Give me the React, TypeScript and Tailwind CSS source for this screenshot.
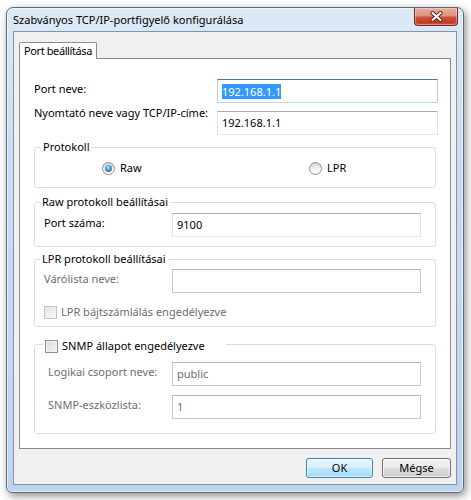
import React from "react";

const inputBase =
  "flex items-center h-[24px] pl-[4px] bg-white border border-t-[#abadb3] border-l-[#e2e3ea] border-r-[#e2e3ea] border-b-[#e3e9ef]";

function Radio({ checked }: { checked?: boolean }) {
  return (
    <span className="flex items-center justify-center w-[13px] h-[13px] rounded-full border border-[#8e8f8f] bg-[linear-gradient(180deg,#d4d4d4_0%,#f4f4f4_60%,#ffffff_100%)] shrink-0">
      {checked && (
        <span className="w-[7px] h-[7px] rounded-full bg-[radial-gradient(circle_at_45%_35%,#c4e6f8_0%,#4a98cc_45%,#1a5a8a_100%)]" />
      )}
    </span>
  );
}

function Checkbox({ disabled }: { disabled?: boolean }) {
  return (
    <span
      className={
        disabled
          ? "w-[13px] h-[13px] border border-[#c4c4c4] bg-[linear-gradient(135deg,#e6e6e6_0%,#f7f7f7_100%)] shrink-0"
          : "w-[13px] h-[13px] border border-[#8e8f8f] bg-[linear-gradient(135deg,#d8d8d8_0%,#f6f6f6_100%)] shadow-[inset_0_0_0_1px_#f4f4f4] shrink-0"
      }
    />
  );
}

export default function App() {
  return (
    <div className="w-[471px] h-[500px] bg-white pt-[7px] pl-[6px] font-['Noto_Sans',sans-serif] text-[11px] leading-[16px] text-black">
      <div className="w-[458px] h-[486px] rounded-t-[7px] rounded-b-[6px] border border-[#5a6878] bg-[linear-gradient(180deg,#dde9f5_0%,#cadcf0_30%,#bed4ed_100%)] shadow-[inset_0_0_0_1px_rgba(255,255,255,0.65),2px_3px_8px_rgba(0,0,0,0.45)] flex flex-col">
        {/* title bar */}
        <div className="h-[23px] flex items-start justify-between">
          <span className="pl-[6px] pt-[4px] text-[11px] leading-[16px] text-black">
            Szabványos TCP/IP-portfigyelő konfigurálása
          </span>
          <div className="mr-[5px] w-[44px] h-[18px] rounded-b-[4px] border border-t-0 border-[#6e2d24] bg-[linear-gradient(180deg,#e6ad9e_0%,#dc9280_45%,#c9533e_55%,#c43a26_85%,#d0563f_100%)] shadow-[inset_0_0_0_1px_rgba(255,255,255,0.35)] flex items-center justify-center">
            <svg width="13" height="11" viewBox="0 0 13 11">
              <path d="M2.5 2 L10.5 9 M10.5 2 L2.5 9" stroke="#5a1d16" strokeWidth="4" strokeLinecap="round" />
              <path d="M2.5 2 L10.5 9 M10.5 2 L2.5 9" stroke="#ffffff" strokeWidth="2.2" strokeLinecap="round" />
            </svg>
          </div>
        </div>
        {/* client area */}
        <div className="mx-[6px] h-[454px] border border-[#7f94ad] bg-[#f0f0f0] flex flex-col pt-[10px] pl-[5px] pr-[5px]">
          {/* tabs */}
          <div className="flex">
            <div className="relative z-10 -mb-px w-[78px] h-[17px] border border-b-0 border-[#898c95] rounded-t-[2px] bg-white flex items-center justify-center whitespace-nowrap tracking-[-0.4px]">
              Port beállítása
            </div>
          </div>
          {/* panel */}
          <div className="h-[391px] border border-[#898c95] bg-white flex flex-col pl-[14px] pr-[12px] pt-[20px]">
            {/* row 1 */}
            <div className="flex justify-between items-start">
              <span className="mt-[2px]">Port neve:</span>
              <div className="w-[221px] h-[24px] flex items-center pl-[4px] bg-white border border-t-[#3d7bad] border-l-[#b5cfe7] border-r-[#b5cfe7] border-b-[#b7d9ed]">
                <span className="bg-[#3399ff] text-white leading-[15px]">192.168.1.1</span>
              </div>
            </div>
            {/* row 2 */}
            <div className="flex justify-between items-start mt-[2px]">
              <span>Nyomtató neve vagy TCP/IP-címe:</span>
              <div className={"w-[221px] mt-[6px] " + inputBase}>192.168.1.1</div>
            </div>
            {/* Protokoll */}
            <fieldset className="mt-[4px] w-[402px] border border-[#d5dfe5] rounded-[3px] pb-[11px]">
              <legend className="ml-[6px] px-[2px]">Protokoll</legend>
              <div className="flex items-center mt-[5px] pl-[67px]">
                <div className="w-[207px] flex items-center gap-[5px]">
                  <Radio checked />
                  <span>Raw</span>
                </div>
                <div className="flex items-center gap-[5px]">
                  <Radio />
                  <span>LPR</span>
                </div>
              </div>
            </fieldset>
            {/* Raw */}
            <fieldset className="mt-[6px] w-[402px] border border-[#d5dfe5] rounded-[3px] pb-[9px] pl-[9px] pr-[14px]">
              <legend className="-ml-[4px] px-[2px]">Raw protokoll beállításai</legend>
              <div className="flex justify-between items-start mt-[3px]">
                <span className="mt-[2px]">Port száma:</span>
                <div className={"w-[249px] " + inputBase}>9100</div>
              </div>
            </fieldset>
            {/* LPR */}
            <fieldset className="mt-[4px] w-[402px] border border-[#d5dfe5] rounded-[3px] pb-[6px] pl-[9px] pr-[14px]">
              <legend className="-ml-[4px] px-[2px]">LPR protokoll beállításai</legend>
              <div className="flex justify-between items-start mt-[2px]">
                <span className="mt-[2px] text-[#6d6d6d]">Várólista neve:</span>
                <div className="w-[249px] h-[24px] bg-white border border-[#c9c9c9] border-t-[#b4b4b4]" />
              </div>
              <div className="flex items-center gap-[4px] mt-[11px] h-[16px]">
                <Checkbox disabled />
                <span className="text-[#6d6d6d]">LPR bájtszámlálás engedélyezve</span>
              </div>
            </fieldset>
            {/* SNMP */}
            <fieldset className="mt-[7px] w-[402px] border border-[#d5dfe5] rounded-[3px] pb-[14px] pl-[13px] pr-[14px]">
              <legend className="-ml-[5px] pl-[2px] pr-[21px] pt-[4px] flex items-center gap-[4px]">
                <Checkbox />
                <span>SNMP állapot engedélyezve</span>
              </legend>
              <div className="flex justify-between items-start mt-[8px]">
                <span className="mt-[2px] text-[#6d6d6d]">Logikai csoport neve:</span>
                <div className="w-[249px] h-[24px] flex items-center pl-[4px] bg-white border border-[#c9c9c9] border-t-[#b4b4b4] text-[#6d6d6d]">
                  public
                </div>
              </div>
              <div className="flex justify-between items-start mt-[9px]">
                <span className="mt-[2px] text-[#6d6d6d]">SNMP-eszközlista:</span>
                <div className="w-[249px] h-[24px] flex items-center pl-[4px] bg-white border border-[#c9c9c9] border-t-[#b4b4b4] text-[#6d6d6d]">
                  1
                </div>
              </div>
            </fieldset>
          </div>
          {/* buttons */}
          <div className="flex justify-end gap-[9px] mt-[9px] pr-[0px]">
            <button className="w-[67px] h-[20px] rounded-[3px] border border-[#3c7fb1] bg-[linear-gradient(180deg,#eaf6fd_0%,#d9f0fc_50%,#bee6fd_51%,#a7d9f5_100%)] shadow-[inset_0_0_0_1px_rgba(255,255,255,0.6)] text-[11px] leading-[16px] text-black">
              OK
            </button>
            <button className="w-[69px] h-[20px] rounded-[3px] border border-[#707070] bg-[linear-gradient(180deg,#f2f2f2_0%,#ebebeb_50%,#dddddd_51%,#cfcfcf_100%)] shadow-[inset_0_0_0_1px_rgba(255,255,255,0.7)] text-[11px] leading-[16px] text-black">
              Mégse
            </button>
          </div>
        </div>
      </div>
    </div>
  );
}
